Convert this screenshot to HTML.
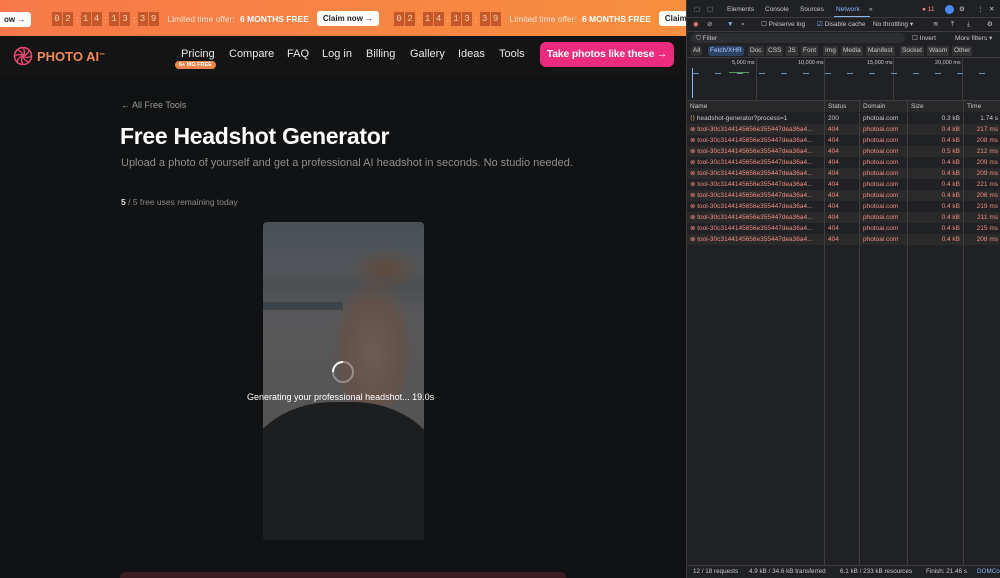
<!DOCTYPE html>
<html><head><meta charset="utf-8"><style>
*{box-sizing:border-box;margin:0;padding:0}
body{width:1000px;height:578px;overflow:hidden;background:#111;font-family:"Liberation Sans",sans-serif;position:relative}
.left{position:absolute;left:0;top:0;width:686px;height:578px;background:#111213;overflow:hidden}
.banner{position:absolute;left:0;top:0;width:686px;height:36px;background:linear-gradient(90deg,#f7794a,#f78f3e);}
.b{position:absolute;top:11px;font-size:8.5px;color:#fff;white-space:nowrap;display:flex;align-items:center}
.dg{display:inline-block;width:10px;height:14px;background:#c5582a;color:#f5d0b0;font-family:"Liberation Mono",monospace;font-size:9px;text-align:center;line-height:14px;margin-right:1px}
.col{color:#f5d0b0;font-size:9px;margin:0 2px}
.claim{background:#fff;color:#222;font-weight:bold;border-radius:3px;padding:3px 6px;font-size:8px}
.nav{position:absolute;top:36px;left:0;width:686px;height:40px;background:#141414}
.logo{position:absolute;left:13px;top:10px;display:flex;align-items:center;color:#f08a55;font-weight:bold;font-size:13px}
.nv{position:absolute;top:12px;color:#e8e8e8;font-size:11px;white-space:nowrap}
.cta{position:absolute;left:540px;top:6px;width:134px;height:25px;background:#ec2b7e;border-radius:6px;color:#fff;font-weight:bold;font-size:10.5px;line-height:25px;text-align:center;white-space:nowrap;letter-spacing:-0.2px}
.dt{position:absolute;left:686px;top:0;width:314px;height:578px;background:#202124;font-size:6.5px;color:#c8c8c8;overflow:hidden;border-left:1px solid #3c3c3c}
.row{position:absolute;left:0;width:314px;height:11px;line-height:11px}
.c{position:absolute;top:0;height:11px;border-left:1px solid #3e3e3e;padding-left:3px;white-space:nowrap;overflow:hidden}
.err{color:#f28b82}
</style></head><body>
<div class="left">
 <div class="banner">
  <div class="b" style="left:-2px;top:12px"><span class="claim" style="border-radius:0 3px 3px 0">ow →</span></div>
  <div class="b" style="left:52px"><span class="dg">0</span><span class="dg">2</span><span class="col">:</span><span class="dg">1</span><span class="dg">4</span><span class="col">:</span><span class="dg">1</span><span class="dg">3</span><span class="col">:</span><span class="dg">3</span><span class="dg">9</span><span style="margin-left:8px;color:#fbe0cc">Limited time offer:</span><b style="margin-left:5px">6 MONTHS FREE</b><span class="claim" style="margin-left:8px">Claim now →</span></div>
  <div class="b" style="left:394px"><span class="dg">0</span><span class="dg">2</span><span class="col">:</span><span class="dg">1</span><span class="dg">4</span><span class="col">:</span><span class="dg">1</span><span class="dg">3</span><span class="col">:</span><span class="dg">3</span><span class="dg">9</span><span style="margin-left:8px;color:#fbe0cc">Limited time offer:</span><b style="margin-left:5px">6 MONTHS FREE</b><span class="claim" style="margin-left:8px">Claim now →</span></div>
 </div>
 <div class="nav">
  <div class="logo"><svg width="20" height="20" viewBox="0 0 20 20"><circle cx="10" cy="10" r="8.5" fill="none" stroke="#e8456e" stroke-width="1.6"/><g stroke="#e8456e" stroke-width="1.4" fill="none"><path d="M10 2Q13 6 10 10"/><path d="M18 10Q14 13 10 10"/><path d="M10 18Q7 14 10 10"/><path d="M2 10Q6 7 10 10"/><path d="M4 4Q9 5 10 10"/><path d="M16 4Q15 9 10 10"/><path d="M16 16Q11 15 10 10"/><path d="M4 16Q5 11 10 10"/></g></svg><span style="margin-left:4px">PHOTO AI</span><sup style="font-size:6px">™</sup></div>
  <div class="nv" style="left:181px">Pricing</div>
  <div style="position:absolute;left:175px;top:25px;background:#f0854a;color:#fff;font-size:5.5px;font-weight:bold;border-radius:5px;padding:1px 4px">6+ MO FREE</div>
  <div class="nv" style="left:229px">Compare</div>
  <div class="nv" style="left:287px">FAQ</div>
  <div class="nv" style="left:322px">Log in</div>
  <div class="nv" style="left:366px">Billing</div>
  <div class="nv" style="left:410px">Gallery</div>
  <div class="nv" style="left:458px">Ideas</div>
  <div class="nv" style="left:499px">Tools</div>
  <div class="cta">Take photos like these →</div>
 </div>
 <div style="position:absolute;left:121px;top:100px;color:#9a9a9a;font-size:9px">← All Free Tools</div>
 <div style="position:absolute;left:120px;top:123px;color:#fff;font-size:23px;font-weight:bold;letter-spacing:-0.3px">Free Headshot Generator</div>
 <div style="position:absolute;left:121px;top:157px;color:#8e8e8e;font-size:11px">Upload a photo of yourself and get a professional AI headshot in seconds. No studio needed.</div>
 <div style="position:absolute;left:121px;top:197px;color:#8a8a8a;font-size:8.5px"><b style="color:#ddd">5</b> / 5 free uses remaining today</div>
 <div style="position:absolute;left:263px;top:222px;width:161px;height:318px;border-radius:4px;overflow:hidden;background:linear-gradient(180deg,#4a5055 0%,#52565a 15%,#4c4f52 20%,#58585a 30%,#555555 60%,#4a4a4a 100%)">
  <div style="position:absolute;left:0;top:80px;width:80px;height:8px;background:#3d434a"></div>
  <div style="position:absolute;left:70px;top:60px;width:80px;height:130px;border-radius:45% 45% 45% 45%;background:radial-gradient(ellipse at 50% 55%,#6e5b54 0%,#63514a 50%,rgba(80,65,58,0) 75%)"></div>
  <div style="position:absolute;left:85px;top:25px;width:75px;height:45px;border-radius:50%;background:radial-gradient(ellipse,#5e4a3c 0%,rgba(90,72,60,0) 70%)"></div>
  <div style="position:absolute;left:-20px;top:180px;width:200px;height:160px;border-radius:45% 45% 0 0;background:#1d1e20"></div>
 </div>
 <svg style="position:absolute;left:331px;top:360px" width="24" height="24"><circle cx="12" cy="12" r="10" fill="none" stroke="rgba(255,255,255,.35)" stroke-width="2"/><path d="M12 2A10 10 0 0 0 2 12" fill="none" stroke="#fff" stroke-width="2"/></svg>
 <div style="position:absolute;left:247px;top:392px;color:#fff;font-size:9px">Generating your professional headshot... 19.0s</div>
 <div style="position:absolute;left:120px;top:572px;width:446px;height:10px;border-radius:5px;background:#3a1c22"></div>
</div>
<div class="dt">
 <div class="row" style="top:4px;color:#c8c8c8">
  <span style="position:absolute;left:7px">⬚</span><span style="position:absolute;left:20px">⬚</span>
  <span style="position:absolute;left:40px">Elements</span><span style="position:absolute;left:78px">Console</span><span style="position:absolute;left:113px">Sources</span><span style="position:absolute;left:149px;color:#8ab4f8">Network</span><span style="position:absolute;left:182px">»</span>
  <span style="position:absolute;left:235px;color:#f28b82">● 11</span>
  <span style="position:absolute;left:258px;width:9px;height:9px;border-radius:50%;background:#4a8af4;top:1px"></span>
  <span style="position:absolute;left:272px">⚙</span><span style="position:absolute;left:290px">⋮</span><span style="position:absolute;left:302px">✕</span>
 </div>
 <div style="position:absolute;left:147px;top:16px;width:36px;height:1px;background:#8ab4f8"></div>
 <div style="position:absolute;left:0;top:17px;width:314px;height:1px;background:#3c3c3c"></div>
 <div class="row" style="top:19px">
  <span style="position:absolute;left:6px;color:#f28b82">◉</span><span style="position:absolute;left:20px">⊘</span><span style="position:absolute;left:40px;color:#8ab4f8">▼</span><span style="position:absolute;left:54px">⌕</span>
  <span style="position:absolute;left:74px">☐ Preserve log</span><span style="position:absolute;left:130px"><span style="color:#8ab4f8">☑</span> Disable cache</span><span style="position:absolute;left:186px">No throttling ▾</span>
  <span style="position:absolute;left:246px">≋</span><span style="position:absolute;left:264px">⤒</span><span style="position:absolute;left:280px">⤓</span><span style="position:absolute;left:300px">⚙</span>
 </div>
 <div style="position:absolute;left:0;top:31px;width:314px;height:1px;background:#3c3c3c"></div>
 <div style="position:absolute;left:4px;top:33px;width:214px;height:10px;border-radius:5px;background:#2d2e31"></div>
 <div class="row" style="top:33px"><span style="position:absolute;left:9px">⛉ Filter</span><span style="position:absolute;left:225px">☐ Invert</span><span style="position:absolute;left:268px">More filters ▾</span></div>
 <div class="row" style="top:46px">
  <span style="position:absolute;left:4px;background:#333;border-radius:3px;padding:0 2px;line-height:10px">All</span>
  <span style="position:absolute;left:21px;background:#2b4466;color:#aecbfa;border-radius:3px;padding:0 2px;line-height:10px">Fetch/XHR</span>
  <span style="position:absolute;left:61px;background:#333;padding:0 2px;line-height:10px">Doc</span><span style="position:absolute;left:79px;background:#333;padding:0 2px;line-height:10px">CSS</span><span style="position:absolute;left:99px;background:#333;padding:0 2px;line-height:10px">JS</span><span style="position:absolute;left:114px;background:#333;padding:0 2px;line-height:10px">Font</span><span style="position:absolute;left:136px;background:#333;padding:0 2px;line-height:10px">Img</span><span style="position:absolute;left:154px;background:#333;padding:0 2px;line-height:10px">Media</span><span style="position:absolute;left:179px;background:#333;padding:0 2px;line-height:10px">Manifest</span><span style="position:absolute;left:213px;background:#333;padding:0 2px;line-height:10px">Socket</span><span style="position:absolute;left:240px;background:#333;padding:0 2px;line-height:10px">Wasm</span><span style="position:absolute;left:265px;background:#333;padding:0 2px;line-height:10px">Other</span>
 </div>
 <div style="position:absolute;left:0;top:57px;width:314px;height:1px;background:#3c3c3c"></div>
 <div style="position:absolute;left:0;top:58px;width:314px;height:42px;font-size:5.5px">
  <span style="position:absolute;left:45px;top:2px">5,000 ms</span><span style="position:absolute;left:111px;top:2px">10,000 ms</span><span style="position:absolute;left:180px;top:2px">15,000 ms</span><span style="position:absolute;left:248px;top:2px">20,000 ms</span>
  <div style="position:absolute;left:69px;top:0;width:1px;height:42px;background:#3c3c3c"></div><div style="position:absolute;left:137px;top:0;width:1px;height:42px;background:#3c3c3c"></div><div style="position:absolute;left:206px;top:0;width:1px;height:42px;background:#3c3c3c"></div><div style="position:absolute;left:275px;top:0;width:1px;height:42px;background:#3c3c3c"></div>
  <div style="position:absolute;left:6px;top:15px;width:300px;height:1px;background:repeating-linear-gradient(90deg,#6a8fb8 0 6px,transparent 6px 22px)"></div>
  <div style="position:absolute;left:42px;top:14px;width:20px;height:1px;background:#5a9a5a"></div>
  <div style="position:absolute;left:5px;top:10px;width:1px;height:30px;background:#8ab4f8"></div>
 </div>
 <div style="position:absolute;left:0;top:100px;width:314px;height:1px;background:#3c3c3c"></div>
 <div class="row" style="top:101px;background:#282828">
  <div class="c" style="left:0;width:137px;border:0">Name</div><div class="c" style="left:137px;width:35px">Status</div><div class="c" style="left:172px;width:48px">Domain</div><div class="c" style="left:220px;width:56px">Size</div><div class="c" style="left:276px;width:40px">Time</div>
 </div>
 <div style="position:absolute;left:0;top:565px;width:314px;height:13px;border-top:1px solid #3c3c3c;line-height:12px;font-size:6.3px;white-space:nowrap">
  <span style="position:absolute;left:6px">12 / 18 requests</span><span style="position:absolute;left:62px">4.9 kB / 34.6 kB transferred</span><span style="position:absolute;left:153px">6.1 kB / 233 kB resources</span><span style="position:absolute;left:239px">Finish: 21.46 s</span><span style="position:absolute;left:290px;color:#8ab4f8">DOMCo</span>
 </div>
</div>
<div id="r" style="position:absolute;left:687px;top:113px;width:313px;font-size:6.5px;color:#c8c8c8">
 <div class="row" style="top:0"><div class="c" style="left:0;width:137px;border:0"><span style="color:#e8a060">⟨⟩</span> headshot-generator?process=1</div><div class="c" style="left:137px;width:35px">200</div><div class="c" style="left:172px;width:48px">photoai.com</div><div class="c" style="left:220px;width:56px;text-align:right;padding-right:3px">0.3 kB</div><div class="c" style="left:276px;width:37px;text-align:right;padding-right:2px">1.74 s</div></div>
 <div class="row err" style="top:11px;background:#2a2a2a"><div class="c" style="left:0;width:137px;border:0">⊗ tool-30c3144145656e355447dea36a4...</div><div class="c" style="left:137px;width:35px">404</div><div class="c" style="left:172px;width:48px">photoai.com</div><div class="c" style="left:220px;width:56px;text-align:right;padding-right:3px">0.4 kB</div><div class="c" style="left:276px;width:37px;text-align:right;padding-right:2px">217 ms</div></div>
 <div class="row err" style="top:22px"><div class="c" style="left:0;width:137px;border:0">⊗ tool-30c3144145656e355447dea36a4...</div><div class="c" style="left:137px;width:35px">404</div><div class="c" style="left:172px;width:48px">photoai.com</div><div class="c" style="left:220px;width:56px;text-align:right;padding-right:3px">0.4 kB</div><div class="c" style="left:276px;width:37px;text-align:right;padding-right:2px">208 ms</div></div>
 <div class="row err" style="top:33px;background:#2a2a2a"><div class="c" style="left:0;width:137px;border:0">⊗ tool-30c3144145656e355447dea36a4...</div><div class="c" style="left:137px;width:35px">404</div><div class="c" style="left:172px;width:48px">photoai.com</div><div class="c" style="left:220px;width:56px;text-align:right;padding-right:3px">0.5 kB</div><div class="c" style="left:276px;width:37px;text-align:right;padding-right:2px">212 ms</div></div>
 <div class="row err" style="top:44px"><div class="c" style="left:0;width:137px;border:0">⊗ tool-30c3144145656e355447dea36a4...</div><div class="c" style="left:137px;width:35px">404</div><div class="c" style="left:172px;width:48px">photoai.com</div><div class="c" style="left:220px;width:56px;text-align:right;padding-right:3px">0.4 kB</div><div class="c" style="left:276px;width:37px;text-align:right;padding-right:2px">209 ms</div></div>
 <div class="row err" style="top:55px;background:#2a2a2a"><div class="c" style="left:0;width:137px;border:0">⊗ tool-30c3144145656e355447dea36a4...</div><div class="c" style="left:137px;width:35px">404</div><div class="c" style="left:172px;width:48px">photoai.com</div><div class="c" style="left:220px;width:56px;text-align:right;padding-right:3px">0.4 kB</div><div class="c" style="left:276px;width:37px;text-align:right;padding-right:2px">209 ms</div></div>
 <div class="row err" style="top:66px"><div class="c" style="left:0;width:137px;border:0">⊗ tool-30c3144145656e355447dea36a4...</div><div class="c" style="left:137px;width:35px">404</div><div class="c" style="left:172px;width:48px">photoai.com</div><div class="c" style="left:220px;width:56px;text-align:right;padding-right:3px">0.4 kB</div><div class="c" style="left:276px;width:37px;text-align:right;padding-right:2px">221 ms</div></div>
 <div class="row err" style="top:77px;background:#2a2a2a"><div class="c" style="left:0;width:137px;border:0">⊗ tool-30c3144145656e355447dea36a4...</div><div class="c" style="left:137px;width:35px">404</div><div class="c" style="left:172px;width:48px">photoai.com</div><div class="c" style="left:220px;width:56px;text-align:right;padding-right:3px">0.4 kB</div><div class="c" style="left:276px;width:37px;text-align:right;padding-right:2px">206 ms</div></div>
 <div class="row err" style="top:88px"><div class="c" style="left:0;width:137px;border:0">⊗ tool-30c3144145656e355447dea36a4...</div><div class="c" style="left:137px;width:35px">404</div><div class="c" style="left:172px;width:48px">photoai.com</div><div class="c" style="left:220px;width:56px;text-align:right;padding-right:3px">0.4 kB</div><div class="c" style="left:276px;width:37px;text-align:right;padding-right:2px">219 ms</div></div>
 <div class="row err" style="top:99px;background:#2a2a2a"><div class="c" style="left:0;width:137px;border:0">⊗ tool-30c3144145656e355447dea36a4...</div><div class="c" style="left:137px;width:35px">404</div><div class="c" style="left:172px;width:48px">photoai.com</div><div class="c" style="left:220px;width:56px;text-align:right;padding-right:3px">0.4 kB</div><div class="c" style="left:276px;width:37px;text-align:right;padding-right:2px">211 ms</div></div>
 <div class="row err" style="top:110px"><div class="c" style="left:0;width:137px;border:0">⊗ tool-30c3144145656e355447dea36a4...</div><div class="c" style="left:137px;width:35px">404</div><div class="c" style="left:172px;width:48px">photoai.com</div><div class="c" style="left:220px;width:56px;text-align:right;padding-right:3px">0.4 kB</div><div class="c" style="left:276px;width:37px;text-align:right;padding-right:2px">215 ms</div></div>
 <div class="row err" style="top:121px;background:#2a2a2a"><div class="c" style="left:0;width:137px;border:0">⊗ tool-30c3144145656e355447dea36a4...</div><div class="c" style="left:137px;width:35px">404</div><div class="c" style="left:172px;width:48px">photoai.com</div><div class="c" style="left:220px;width:56px;text-align:right;padding-right:3px">0.4 kB</div><div class="c" style="left:276px;width:37px;text-align:right;padding-right:2px">208 ms</div></div>
 <div style="position:absolute;left:137px;top:132px;width:1px;height:320px;background:#3e3e3e"></div>
 <div style="position:absolute;left:172px;top:132px;width:1px;height:320px;background:#3e3e3e"></div>
 <div style="position:absolute;left:220px;top:132px;width:1px;height:320px;background:#3e3e3e"></div>
 <div style="position:absolute;left:276px;top:132px;width:1px;height:320px;background:#3e3e3e"></div>
</div>
</body></html>
